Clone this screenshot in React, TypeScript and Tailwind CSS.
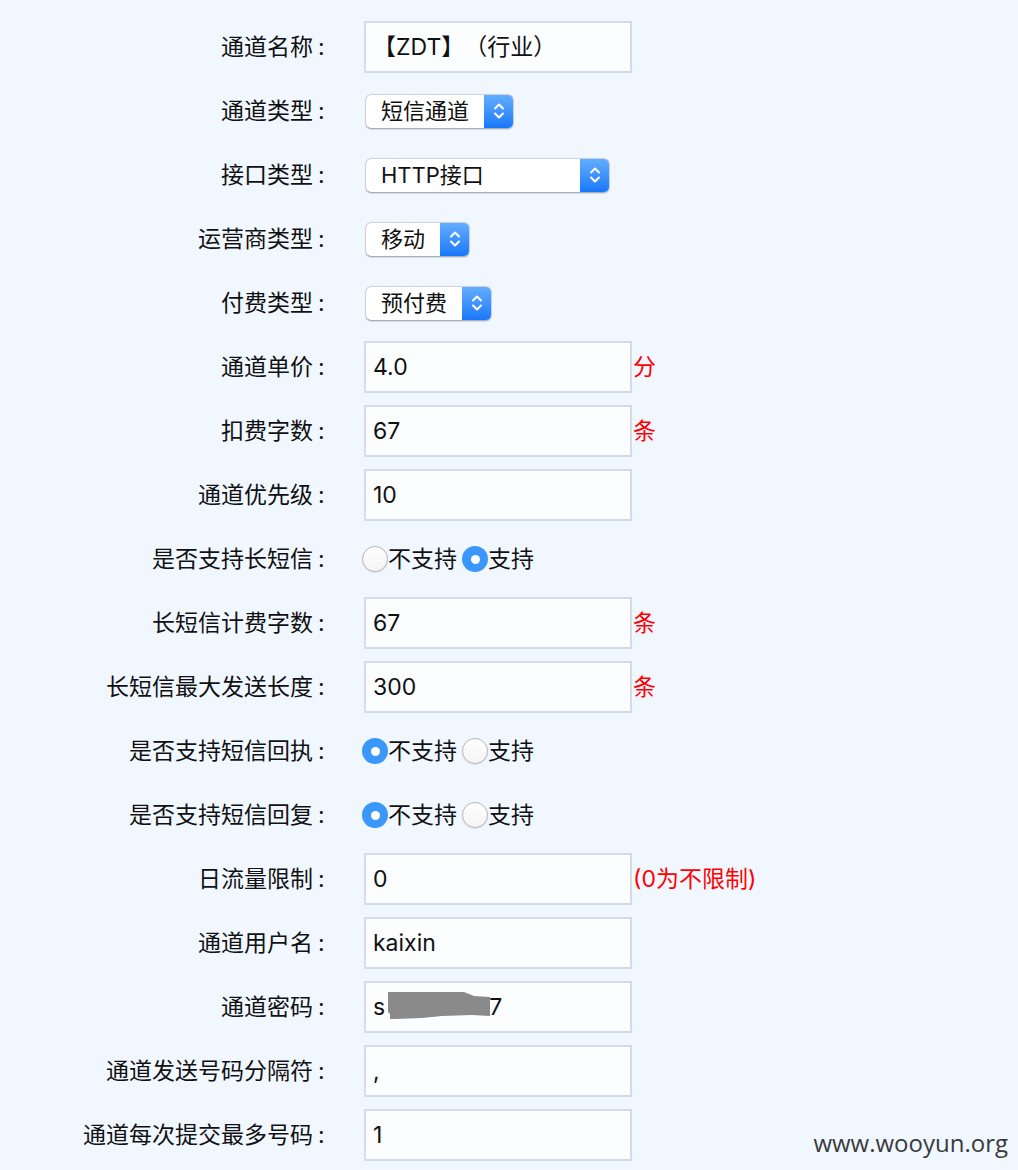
import React from "react";

const FONT = '"Inter", "Noto Sans CJK SC", sans-serif';

function Row({ label, children }: { label: string; children: React.ReactNode }) {
  return (
    <div className="flex items-center h-[64px]">
      <div className="w-[313px] text-right text-[23px] text-[#111] whitespace-nowrap">{label}</div>
      <div className="w-[51px] pl-[5px] text-[23px] text-[#111]">:</div>
      <div className="flex items-center">{children}</div>
    </div>
  );
}

function TextBox({ value, children }: { value?: string; children?: React.ReactNode }) {
  return (
    <div className="relative w-[268px] h-[52px] border-2 border-[#d3dce8] bg-[#fbfdff] flex items-center pl-[7px] text-[23px] text-[#111] [text-spacing-trim:space-all] whitespace-pre">
      {value}
      {children}
    </div>
  );
}

function Unit({ text }: { text: string }) {
  return <span className="ml-[1px] text-[23px] text-[#ff0000]">{text}</span>;
}

function Select({ value, width }: { value: string; width: number }) {
  const w =
    width === 147 ? "w-[147px]" : width === 243 ? "w-[243px]" : width === 103 ? "w-[103px]" : "w-[125px]";
  return (
    <div
      className={`ml-[2px] ${w} h-[33px] flex rounded-[5px] bg-white shadow-[0_0.5px_2px_rgba(0,0,0,0.35),0_0_0_0.5px_rgba(0,0,0,0.12)]`}
    >
      <div className="flex-1 flex items-center pl-[15px] text-[22px] text-[#111]">{value}</div>
      <div className="w-[29px] h-full rounded-r-[5px] bg-gradient-to-b from-[#62adff] to-[#1677fb] flex items-center justify-center">
        <svg width="14" height="22" viewBox="0 0 14 22" fill="none">
          <path d="M3 8.5 L7 4.5 L11 8.5" stroke="white" strokeWidth="2" strokeLinecap="round" strokeLinejoin="round" />
          <path d="M3 13.5 L7 17.5 L11 13.5" stroke="white" strokeWidth="2" strokeLinecap="round" strokeLinejoin="round" />
        </svg>
      </div>
    </div>
  );
}

function Radio({ checked }: { checked: boolean }) {
  if (checked) {
    return (
      <span className="w-[26px] h-[26px] rounded-full bg-[#3b97fb] flex items-center justify-center shrink-0">
        <span className="w-[9px] h-[9px] rounded-full bg-white" />
      </span>
    );
  }
  return (
    <span className="w-[26px] h-[26px] rounded-full bg-gradient-to-b from-[#ffffff] to-[#f4f4f4] border border-[#b9b9b9] shadow-[0_0.5px_1px_rgba(0,0,0,0.2)] shrink-0" />
  );
}

function RadioPair({ first }: { first: boolean }) {
  return (
    <div className="ml-[-2px] flex items-center text-[23px] text-[#111]">
      <Radio checked={first} />
      <span>不支持</span>
      <span className="ml-[5px]" />
      <Radio checked={!first} />
      <span>支持</span>
    </div>
  );
}

export default function App() {
  return (
    <div className="relative w-[1018px] min-h-[1170px] bg-[#f0f7ff] pt-[15px]" style={{ fontFamily: FONT }}>
      <Row label="通道名称">
        <TextBox value="【ZDT】（行业）" />
      </Row>
      <Row label="通道类型">
        <Select value="短信通道" width={147} />
      </Row>
      <Row label="接口类型">
        <Select value="HTTP接口" width={243} />
      </Row>
      <Row label="运营商类型">
        <Select value="移动" width={103} />
      </Row>
      <Row label="付费类型">
        <Select value="预付费" width={125} />
      </Row>
      <Row label="通道单价">
        <TextBox value="4.0" />
        <Unit text="分" />
      </Row>
      <Row label="扣费字数">
        <TextBox value="67" />
        <Unit text="条" />
      </Row>
      <Row label="通道优先级">
        <TextBox value="10" />
      </Row>
      <Row label="是否支持长短信">
        <RadioPair first={false} />
      </Row>
      <Row label="长短信计费字数">
        <TextBox value="67" />
        <Unit text="条" />
      </Row>
      <Row label="长短信最大发送长度">
        <TextBox value="300" />
        <Unit text="条" />
      </Row>
      <Row label="是否支持短信回执">
        <RadioPair first={true} />
      </Row>
      <Row label="是否支持短信回复">
        <RadioPair first={true} />
      </Row>
      <Row label="日流量限制">
        <TextBox value="0" />
        <Unit text="(0为不限制)" />
      </Row>
      <Row label="通道用户名">
        <TextBox value="kaixin" />
      </Row>
      <Row label="通道密码">
        <TextBox>
          <span>s</span>
          <span className="inline-block w-[104px]" />
          <span>7</span>
          <svg className="absolute left-[16px] top-[9px]" width="110" height="30" viewBox="0 0 110 30">
            <polygon
              points="6,0 82,0 92,4 108,5 108,24 90,23 60,24 40,26 14,27 8,27 8,22 6,20"
              fill="#8a8a8a"
            />
          </svg>
        </TextBox>
      </Row>
      <Row label="通道发送号码分隔符">
        <TextBox value="," />
      </Row>
      <Row label="通道每次提交最多号码">
        <TextBox value="1" />
      </Row>
      <div className="absolute right-[10px] top-[1125px] text-[24px] text-[#3a3a3a]" style={{ fontFamily: '"Open Sans", sans-serif' }}>
        www.wooyun.org
      </div>
    </div>
  );
}
